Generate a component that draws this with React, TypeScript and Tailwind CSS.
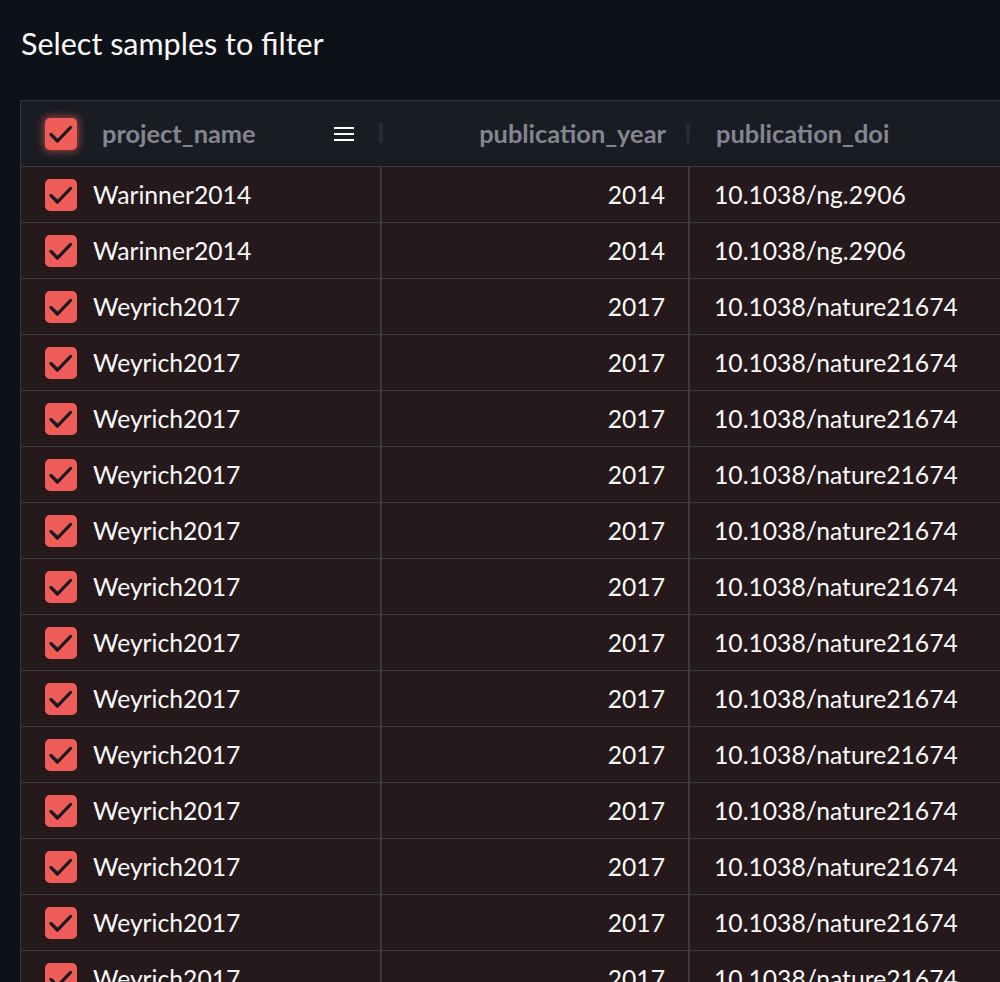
import React from "react";

const rows: [string, string, string][] = [
  ["Warinner2014", "2014", "10.1038/ng.2906"],
  ["Warinner2014", "2014", "10.1038/ng.2906"],
  ...Array.from({ length: 14 }, () => ["Weyrich2017", "2017", "10.1038/nature21674"] as [string, string, string]),
];

function Check({ glow }: { glow?: boolean }) {
  return (
    <div
      className={
        "w-[32px] h-[32px] rounded-[5px] bg-[#ef5d58] flex items-center justify-center shrink-0 " +
        (glow ? "shadow-[0_0_7px_2px_rgba(239,93,88,0.55)]" : "")
      }
    >
      <svg width="32" height="32" viewBox="0 0 32 32" fill="none">
        <path d="M6 16.5 L12.5 23 L25.5 9.5" stroke="#17181c" strokeWidth="3.2" strokeLinecap="round" strokeLinejoin="round" />
      </svg>
    </div>
  );
}

export default function App() {
  const font = { fontFamily: "Lato, 'Noto Sans', sans-serif" };
  return (
    <div className="w-[1000px] h-[982px] overflow-hidden bg-[#0e1117] text-[#fafafa]" style={font}>
      <div className="pl-[21px] pt-[25px] h-[100px]">
        <h1 className="text-[30.5px] leading-[36px] font-normal">Select samples to filter</h1>
      </div>
      <div className="ml-[20px] w-[1000px] border-l border-t border-[#33353c]">
        <div className="flex h-[66px] bg-[#1a1c24] border-b border-[#3a3b40] text-[#83868e] font-bold text-[25.4px]">
          <div className="w-[361px] flex items-center pl-[24px] relative">
            <Check glow />
            <span className="ml-[25px]">project_name</span>
            <div className="ml-auto mr-[28px] flex flex-col gap-[4px]">
              <div className="w-[20px] h-[2px] bg-white" />
              <div className="w-[20px] h-[2px] bg-white" />
              <div className="w-[20px] h-[2px] bg-white" />
            </div>
            <div className="absolute right-[-1px] top-[22px] w-[4px] h-[20px] bg-[#262a33]" />
          </div>
          <div className="w-[308px] flex items-center justify-end pr-[24px] relative">
            <span>publication_year</span>
            <div className="absolute right-[0px] top-[22px] w-[4px] h-[20px] bg-[#262a33]" />
          </div>
          <div className="flex-1 flex items-center pl-[26px]">
            <span>publication_doi</span>
          </div>
        </div>
        {rows.map((r, i) => (
          <div key={i} className="flex h-[56px] bg-[#25191c] border-b border-[#3a3b40] text-[24.7px]">
            <div className="w-[361px] flex items-center pl-[24px] border-r-2 border-[#3a3b40]">
              <Check />
              <span className="ml-[16px]">{r[0]}</span>
            </div>
            <div className="w-[308px] flex items-center justify-end pr-[23px] border-r-2 border-[#3a3b40]">
              <span>{r[1]}</span>
            </div>
            <div className="flex-1 flex items-center pl-[24px]">
              <span>{r[2]}</span>
            </div>
          </div>
        ))}
      </div>
    </div>
  );
}
